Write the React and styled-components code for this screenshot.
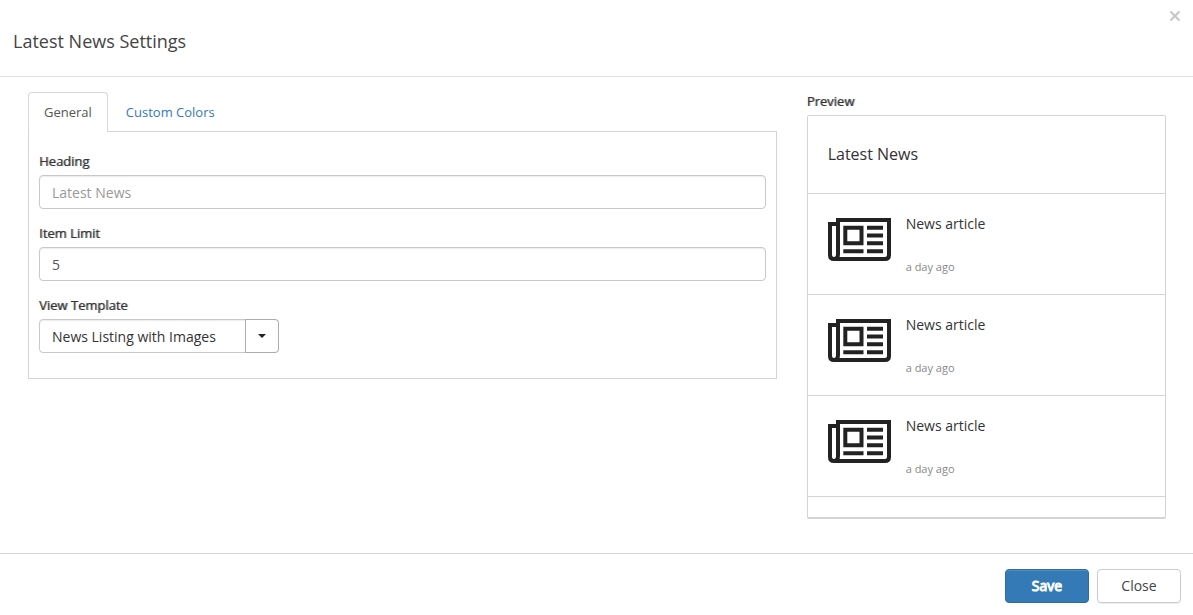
import React, { useState } from "react";
import styled, { createGlobalStyle, css } from "styled-components";

const GlobalStyle = createGlobalStyle`
  *, *::before, *::after { box-sizing: border-box; }
  body {
    margin: 0;
    background: #fff;
    color: #333;
    font: 14px/20px "Open Sans", "Liberation Sans", sans-serif;
  }
  button, input, select { font: inherit; }
`;

const Dialog = styled.form`
  display: flex;
  flex-direction: column;
  background: #fff;
`;

const Header = styled.header`
  display: flex;
  justify-content: space-between;
  align-items: flex-start;
  padding: 0 12px 0 13px;
  border-bottom: 1px solid #e0e0e0;
`;

const Title = styled.h1`
  margin: 0;
  padding: 28px 0 22px;
  font-size: 18px;
  font-weight: 400;
  line-height: 26px;
  color: #444;
`;

const Dismiss = styled.button`
  display: flex;
  margin-top: 10px;
  padding: 0;
  border: 0;
  background: none;
  color: #c6c6c6;
  cursor: pointer;
`;

const Body = styled.main`
  display: grid;
  grid-template-columns: minmax(0, 2fr) minmax(0, 1fr);
  padding: 15px 12px 34px 13px;
`;

const Column = styled.section`
  min-width: 0;
  padding: 0 15px;
`;

const TabList = styled.div`
  display: flex;
  gap: 2px;
  margin-bottom: -1px;
`;

const Tab = styled.button`
  position: relative;
  height: 40px;
  padding: 0 15px 1px;
  border: 1px solid transparent;
  border-bottom: 0;
  border-radius: 4px 4px 0 0;
  background: none;
  font-size: 13px;
  line-height: 18px;
  color: #337ab7;
  cursor: pointer;
  ${(p) =>
    p.$active &&
    css`
      border-color: #d8d8d8;
      background: #fff;
      color: #555;
    `}
`;

const Panel = styled.div`
  display: flex;
  flex-direction: column;
  gap: 15px;
  padding: 20px 10px 25px;
  border: 1px solid #d4d4d4;
`;

const Field = styled.div`
  display: flex;
  flex-direction: column;
  align-items: flex-start;
  gap: 5px;
`;

const labelText = css`
  font-size: 13px;
  line-height: 18px;
  font-weight: 400;
  color: #333;
  text-shadow: 1px 0 rgba(51, 51, 51, 0.5);
`;

const Label = styled.label`
  ${labelText}
`;

const control = css`
  width: 100%;
  height: 34px;
  padding: 0 12px;
  border: 1px solid #c8c8c8;
  border-radius: 4px;
  background: #fff;
  box-shadow: inset 0 1px 1px rgba(0, 0, 0, 0.075);
  color: #555;
`;

const TextBox = styled.input`
  ${control}
  &::placeholder { color: #999; opacity: 1; }
`;

const SelectWrap = styled.div`
  position: relative;
  width: 240px;
`;

const Select = styled.select`
  ${control}
  appearance: none;
  padding-top: 2px;
  color: #333;
`;

const SelectCaret = styled.span`
  position: absolute;
  top: 0;
  right: 0;
  bottom: 0;
  display: flex;
  align-items: center;
  justify-content: center;
  width: 34px;
  border: 1px solid #adadad;
  border-radius: 0 4px 4px 0;
  background: #fff;
  pointer-events: none;
  &::after {
    content: "";
    border: 4px solid transparent;
    border-top: 4px solid #222;
    border-bottom: 0;
  }
`;

const PreviewTitle = styled.h2`
  ${labelText}
  margin: 0 0 5px;
`;

const PreviewCard = styled.div`
  padding-bottom: 20px;
  border: 1px solid #d4d4d4;
  border-bottom-width: 2px;
  border-radius: 2px;
`;

const CardHeading = styled.h3`
  margin: 0;
  padding: 25px 20px 26px;
  border-bottom: 1px solid #d4d4d4;
  font-size: 16px;
  font-weight: 400;
  line-height: 26px;
`;

const NewsList = styled.ul`
  margin: 0;
  padding: 0;
  list-style: none;
`;

const NewsItem = styled.li`
  display: flex;
  gap: 15px;
  padding: 20px 20px 17px;
  border-bottom: 1px solid #d4d4d4;
`;

const Thumb = styled.svg`
  flex: none;
  margin-top: 4px;
`;

const NewsText = styled.div`
  display: flex;
  flex-direction: column;
  justify-content: space-between;
  height: 63px;
`;

const Age = styled.small`
  font-size: 11px;
  line-height: 20px;
  color: #888;
`;

const Footer = styled.footer`
  display: flex;
  justify-content: flex-end;
  gap: 8px;
  padding: 15px 12px 12px;
  border-top: 1px solid #d4d4d4;
`;

const Button = styled.button`
  width: 84px;
  height: 34px;
  border: 1px solid #ccc;
  border-radius: 4px;
  background: #fff;
  box-shadow: 0 1px 1px rgba(0, 0, 0, 0.08);
  color: #444;
  cursor: pointer;
  ${(p) =>
    p.$primary &&
    css`
      border-color: #2e6da4;
      background: #337ab7;
      box-shadow: inset 0 1px 0 rgba(255, 255, 255, 0.15);
      color: #fff;
      -webkit-text-stroke: 1px currentColor;
    `}
`;

function CloseIcon() {
  return (
    <svg width="12" height="12" viewBox="0 0 12 12" aria-hidden="true">
      <path d="M1.5 1.5l9 9M10.5 1.5l-9 9" stroke="currentColor" strokeWidth="2" />
    </svg>
  );
}

function NewspaperIcon() {
  return (
    <Thumb width="63" height="43" viewBox="0 0 63 43" fill="none" stroke="#222" strokeWidth="4" aria-hidden="true">
      <path d="M10 36V2H61V37Q61 41 57 41H6Q2 41 2 37V6H10V36Q10 41 6 41" />
      <path d="M17.3 9.7H33.5V25.3H17.3Z" />
      <path d="M39 9.7H55M39 17.5H55M39 25.3H55M39 33.2H55M15.3 33.2H35.5" />
    </Thumb>
  );
}

const articles = [
  { id: 1, title: "News article", age: "a day ago" },
  { id: 2, title: "News article", age: "a day ago" },
  { id: 3, title: "News article", age: "a day ago" },
];

const tabs = ["General", "Custom Colors"];

export default function App() {
  const [active, setActive] = useState("General");
  return (
    <>
      <GlobalStyle />
      <Dialog onSubmit={(e) => e.preventDefault()}>
        <Header>
          <Title>Latest News Settings</Title>
          <Dismiss type="button" aria-label="Dismiss">
            <CloseIcon />
          </Dismiss>
        </Header>
        <Body>
          <Column>
            <TabList role="tablist">
              {tabs.map((name) => (
                <Tab
                  key={name}
                  type="button"
                  role="tab"
                  aria-selected={active === name}
                  $active={active === name}
                  onClick={() => setActive(name)}
                >
                  {name}
                </Tab>
              ))}
            </TabList>
            <Panel role="tabpanel">
              <Field>
                <Label htmlFor="heading">Heading</Label>
                <TextBox id="heading" type="text" placeholder="Latest News" />
              </Field>
              <Field>
                <Label htmlFor="limit">Item Limit</Label>
                <TextBox id="limit" type="text" inputMode="numeric" defaultValue="5" />
              </Field>
              <Field>
                <Label htmlFor="template">View Template</Label>
                <SelectWrap>
                  <Select id="template">
                    <option>News Listing with Images</option>
                  </Select>
                  <SelectCaret />
                </SelectWrap>
              </Field>
            </Panel>
          </Column>
          <Column>
            <PreviewTitle>Preview</PreviewTitle>
            <PreviewCard>
              <CardHeading>Latest News</CardHeading>
              <NewsList>
                {articles.map((a) => (
                  <NewsItem key={a.id}>
                    <NewspaperIcon />
                    <NewsText>
                      <span>{a.title}</span>
                      <Age>{a.age}</Age>
                    </NewsText>
                  </NewsItem>
                ))}
              </NewsList>
            </PreviewCard>
          </Column>
        </Body>
        <Footer>
          <Button type="submit" $primary>Save</Button>
          <Button type="button">Close</Button>
        </Footer>
      </Dialog>
    </>
  );
}
